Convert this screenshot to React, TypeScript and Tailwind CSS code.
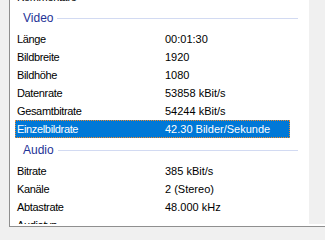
import React from "react";

type Row = { label: string; value: string; selected?: boolean };

const video: Row[] = [
  { label: "Länge", value: "00:01:30" },
  { label: "Bildbreite", value: "1920" },
  { label: "Bildhöhe", value: "1080" },
  { label: "Datenrate", value: "53858 kBit/s" },
  { label: "Gesamtbitrate", value: "54244 kBit/s" },
  { label: "Einzelbildrate", value: "42.30 Bilder/Sekunde", selected: true },
];

const audio: Row[] = [
  { label: "Bitrate", value: "385 kBit/s" },
  { label: "Kanäle", value: "2 (Stereo)" },
  { label: "Abtastrate", value: "48.000 kHz" },
  { label: "Audiotyp", value: "" },
];

function Item({ row }: { row: Row }) {
  return (
    <div
      className={
        "ml-[5px] flex h-[18px] w-[275px] items-center leading-[18px] " +
        (row.selected
          ? "bg-[#0078d7] text-white outline outline-1 outline-dotted outline-[#f08a2c] -outline-offset-1"
          : "text-black")
      }
    >
      <span className="w-[150px] pl-[2px] tracking-[-0.35px]">{row.label}</span>
      <span>{row.value}</span>
    </div>
  );
}

function Group({ title }: { title: string }) {
  return (
    <div className="flex h-[24px] items-center gap-[4px] pl-[13px] pr-[11px]">
      <span className="text-[12px] leading-[24px] text-[#1e3296]">{title}</span>
      <div className="h-px flex-1 bg-[#d2daf2]" />
    </div>
  );
}

export default function App() {
  return (
    <div
      className="h-[240px] w-[325px] overflow-hidden bg-[#f0f0f0] pl-[9px]"
      style={{ fontFamily: '"Liberation Sans", Arial, sans-serif' }}
    >
      <div className="flex h-[227px] w-[330px] border-b border-l border-[#8f8f8f] bg-white">
        <div className="h-[224px] w-[299px] overflow-hidden text-[11px]">
          <div className="-mt-[12px]">
            <Item row={{ label: "Kommentare", value: "" }} />
            <Group title="Video" />
            {video.map((r) => (
              <Item key={r.label} row={r} />
            ))}
            <Group title="Audio" />
            {audio.map((r) => (
              <Item key={r.label} row={r} />
            ))}
          </div>
        </div>
        <div className="h-[224px] w-[17px] bg-[#f0f0f0]" />
      </div>
    </div>
  );
}
